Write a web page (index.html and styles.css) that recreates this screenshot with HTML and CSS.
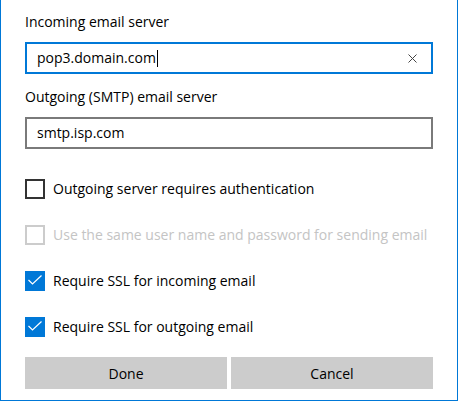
FILE: index.html
```html
<!DOCTYPE html>
<html lang="en">
<head>
<meta charset="utf-8">
<title>Server settings</title>
<link rel="stylesheet" href="styles.css">
</head>
<body>
<div class="dialog">
  <div class="field">
    <div class="label">Incoming email server</div>
    <div class="input focused">
      <span class="value">pop3.domain.com</span><span class="caret"></span>
      <svg class="clear" width="9" height="9" viewBox="0 0 9 9"><path d="M0.5 0.5 L8.5 8.5 M8.5 0.5 L0.5 8.5" stroke="#444" stroke-width="1" fill="none"/></svg>
    </div>
  </div>
  <div class="field second">
    <div class="label">Outgoing (SMTP) email server</div>
    <div class="input">
      <span class="value">smtp.isp.com</span>
    </div>
  </div>
  <div class="checks">
    <div class="check">
      <span class="box"></span>
      <span class="text">Outgoing server requires authentication</span>
    </div>
    <div class="check disabled">
      <span class="box"></span>
      <span class="text">Use the same user name and password for sending email</span>
    </div>
    <div class="check">
      <span class="box checked"><svg width="20" height="20" viewBox="0 0 20 20"><path d="M3.5 9 L7.5 13 L16.5 4.5" stroke="#fff" stroke-width="1.2" fill="none"/></svg></span>
      <span class="text">Require SSL for incoming email</span>
    </div>
    <div class="check">
      <span class="box checked"><svg width="20" height="20" viewBox="0 0 20 20"><path d="M3.5 9 L7.5 13 L16.5 4.5" stroke="#fff" stroke-width="1.2" fill="none"/></svg></span>
      <span class="text">Require SSL for outgoing email</span>
    </div>
  </div>
  <div class="buttons">
    <div class="button">Done</div>
    <div class="button">Cancel</div>
  </div>
</div>
</body>
</html>
```
FILE: styles.css
```css
html, body {
  margin: 0;
  padding: 0;
  background: #fff;
}
body {
  font-family: "Open Sans", "Noto Sans", "Liberation Sans", sans-serif;
  font-size: 14px;
  color: #000;
}
.dialog {
  box-sizing: border-box;
  width: 458px;
  height: 401px;
  border-left: 1px solid #0078d7;
  border-right: 1px solid #0078d7;
  border-bottom: 1px solid #0078d7;
  padding: 12px 24px 0 24px;
  display: flex;
  flex-direction: column;
}
.field {
  display: flex;
  flex-direction: column;
}
.field.second {
  margin-top: 13px;
}
.label {
  line-height: 20px;
  height: 20px;
  margin-bottom: 10px;
  color: #000;
}
.input {
  box-sizing: border-box;
  height: 32px;
  width: 408px;
  border: 2px solid #7a7a7a;
  padding: 0 10px;
  display: flex;
  align-items: center;
}
.input.focused {
  border-color: #0078d7;
}
.value {
  line-height: 20px;
}
.caret {
  width: 1px;
  height: 17px;
  background: #000;
  margin-left: 1px;
}
.clear {
  margin-left: auto;
  margin-right: 4px;
}
.checks {
  margin-top: 30px;
  display: flex;
  flex-direction: column;
  gap: 26px;
}
.check {
  display: flex;
  align-items: center;
  height: 20px;
}
.box {
  box-sizing: border-box;
  width: 20px;
  height: 20px;
  border: 2px solid #333;
  margin-right: 8px;
  flex: none;
}
.box.checked {
  border: none;
  background: #0078d7;
}
.box svg {
  display: block;
}
.check.disabled .box {
  border-color: #cccccc;
}
.check.disabled .text {
  color: #c4c4c4;
}
.text {
  line-height: 20px;
  white-space: nowrap;
}
.buttons {
  margin-top: 20px;
  display: flex;
  gap: 4px;
  width: 408px;
}
.button {
  flex: 1;
  height: 32px;
  background: #cccccc;
  display: flex;
  align-items: center;
  justify-content: center;
}
```
